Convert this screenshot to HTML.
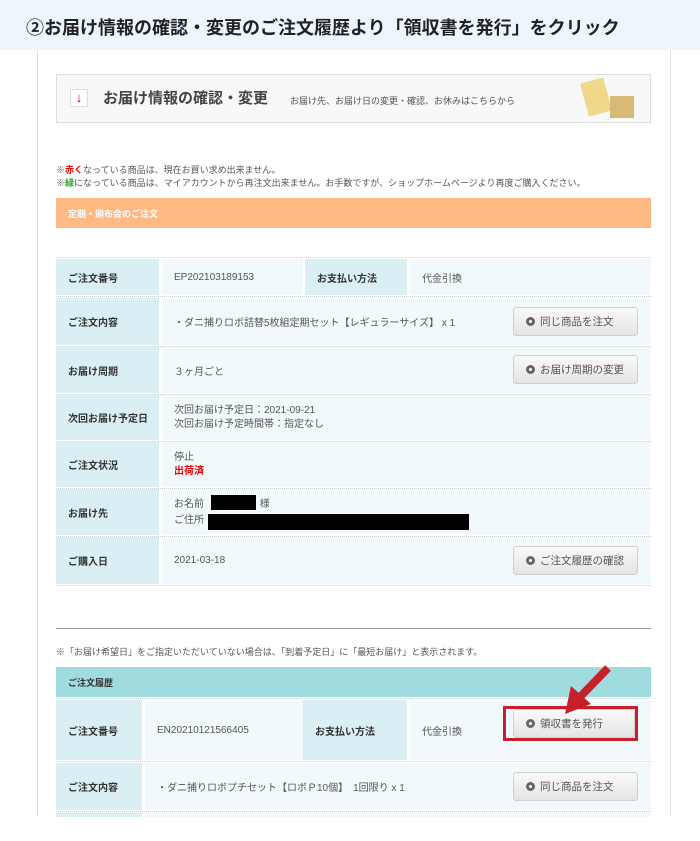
<!DOCTYPE html><html><head><meta charset="utf-8"><style>
*{margin:0;padding:0;box-sizing:border-box}
body{width:700px;height:841px;background:#fff;position:relative;overflow:hidden;font-family:"Liberation Sans","Noto Sans CJK JP",sans-serif;color:#555}
.a{position:absolute}
.lab{position:absolute;background:#daeff4;font-size:10px;font-weight:bold;color:#333;display:flex;align-items:center;padding-left:12px}
.val{position:absolute;background:#f1f9fc;font-size:10px;color:#555;display:flex;align-items:center;padding-left:12px}
.dot{position:absolute;left:56px;width:595px;border-top:1px dotted #ccc}
.btn{position:absolute;left:513px;width:125px;height:29px;border:1px solid #d0d0d0;border-radius:3px;background:linear-gradient(#fafafa,#e4e4e4);font-size:10.5px;color:#555;display:flex;align-items:center;padding-left:12px}
.btn:before{content:"";width:9px;height:9px;border-radius:50%;background:#fff;border:3px solid #666;margin-right:5px;box-sizing:border-box}
</style></head><body>
<div class="a" style="left:0;top:0;width:700px;height:50px;background:#edf5fd"></div>
<div class="a" style="left:26px;top:14px;font-size:18px;font-weight:bold;color:#222;white-space:nowrap">②お届け情報の確認・変更のご注文履歴より「領収書を発行」をクリック</div>
<div class="a" style="left:37px;top:50px;width:1px;height:766px;background:#e0e0e0"></div>
<div class="a" style="left:670px;top:50px;width:1px;height:766px;background:#e0e0e0"></div>
<div class="a" style="left:56px;top:74px;width:595px;height:49px;border:1px solid #ddd;background:#f8f8f8"></div>
<div class="a" style="left:70px;top:89px;width:18px;height:18px;border:1px solid #ddd;background:#fff;color:#c00;font-size:13px;font-weight:bold;text-align:center;line-height:16px">↓</div>
<div class="a" style="left:103px;top:87px;font-size:15px;font-weight:bold;color:#444">お届け情報の確認・変更</div>
<div class="a" style="left:290px;top:94px;font-size:9px;color:#555">お届け先、お届け日の変更・確認、お休みはこちらから</div>
<div class="a" style="left:584px;top:80px;width:24px;height:34px;background:#f0d88a;transform:rotate(-15deg);border-radius:2px"></div>
<div class="a" style="left:610px;top:96px;width:24px;height:22px;background:#d9b878"></div>
<div class="a" style="left:56px;top:164px;font-size:9px;color:#555;line-height:13px">※<b style="color:#e00">赤く</b>なっている商品は、現在お買い求め出来ません。<br>※<b style="color:#2a2">緑</b>になっている商品は、マイアカウントから再注文出来ません。お手数ですが、ショップホームページより再度ご購入ください。</div>
<div class="a" style="left:56px;top:198px;width:595px;height:30px;background:#ffb985;color:#fff;font-size:9px;font-weight:bold;padding:9px 0 0 12px">定期・頒布会のご注文</div>

<div class="dot" style="top:257px"></div>
<div class="lab" style="left:56px;top:259px;width:103px;height:36px">ご注文番号</div>
<div class="val" style="left:162px;top:259px;width:141px;height:36px">EP202103189153</div>
<div class="lab" style="left:305px;top:259px;width:102px;height:36px">お支払い方法</div>
<div class="val" style="left:410px;top:259px;width:241px;height:36px">代金引換</div>
<div class="dot" style="top:296px"></div>
<div class="lab" style="left:56px;top:298px;width:103px;height:47px">ご注文内容</div>
<div class="val" style="left:162px;top:298px;width:489px;height:47px">・ダニ捕りロボ詰替5枚組定期セット【レギュラーサイズ】 x 1</div>
<div class="btn" style="top:307px">同じ商品を注文</div>
<div class="dot" style="top:346px"></div>
<div class="lab" style="left:56px;top:347px;width:103px;height:46px">お届け周期</div>
<div class="val" style="left:162px;top:347px;width:489px;height:46px">３ヶ月ごと</div>
<div class="btn" style="top:355px">お届け周期の変更</div>
<div class="dot" style="top:394px"></div>
<div class="lab" style="left:56px;top:395px;width:103px;height:45px">次回お届け予定日</div>
<div class="val" style="left:162px;top:395px;width:489px;height:45px;line-height:14px"><div>次回お届け予定日：2021-09-21<br>次回お届け予定時間帯：指定なし</div></div>
<div class="dot" style="top:441px"></div>
<div class="lab" style="left:56px;top:442px;width:103px;height:45px">ご注文状況</div>
<div class="val" style="left:162px;top:442px;width:489px;height:45px;line-height:14px"><div>停止<br><b style="color:#e00">出荷済</b></div></div>
<div class="dot" style="top:488px"></div>
<div class="lab" style="left:56px;top:489px;width:103px;height:46px">お届け先</div>
<div class="val" style="left:162px;top:489px;width:489px;height:46px;line-height:16px"><div>お名前 <span style="display:inline-block;width:45px;height:15px;background:#000;margin:0 4px;vertical-align:-3px"></span>様<br>ご住所</div></div>
<div class="a" style="left:208px;top:514px;width:261px;height:16px;background:#000"></div>
<div class="dot" style="top:536px"></div>
<div class="lab" style="left:56px;top:537px;width:103px;height:47px">ご購入日</div>
<div class="val" style="left:162px;top:537px;width:489px;height:47px">2021-03-18</div>
<div class="btn" style="top:546px">ご注文履歴の確認</div>
<div class="dot" style="top:585px"></div>

<div class="a" style="left:56px;top:628px;width:595px;height:1px;background:#999"></div>
<div class="a" style="left:56px;top:645px;font-size:9px;color:#555">※「お届け希望日」をご指定いただいていない場合は、「到着予定日」に「最短お届け」と表示されます。</div>
<div class="a" style="left:56px;top:667px;width:595px;height:30px;background:#a0dcdf;font-size:9px;font-weight:bold;color:#333;padding:9px 0 0 12px">ご注文履歴</div>
<div class="dot" style="top:698px"></div>
<div class="lab" style="left:56px;top:700px;width:86px;height:60px">ご注文番号</div>
<div class="val" style="left:145px;top:700px;width:158px;height:60px">EN20210121566405</div>
<div class="lab" style="left:303px;top:700px;width:104px;height:60px">お支払い方法</div>
<div class="val" style="left:410px;top:700px;width:241px;height:60px">代金引換</div>
<div class="btn" style="top:709px;width:122px">領収書を発行</div>
<div class="a" style="left:503px;top:706px;width:135px;height:35px;border:3px solid #c8202a"></div>
<svg class="a" style="left:555px;top:664px" width="60" height="60"><line x1="53" y1="4" x2="25" y2="33" stroke="#c8202a" stroke-width="8"/><polygon points="10,50 16,22 36,40" fill="#c8202a"/></svg>
<div class="dot" style="top:761px"></div>
<div class="lab" style="left:56px;top:763px;width:86px;height:47px">ご注文内容</div>
<div class="val" style="left:145px;top:763px;width:506px;height:47px">・ダニ捕りロボプチセット【ロボＰ10個】　1回限り x 1</div>
<div class="btn" style="top:772px">同じ商品を注文</div>
<div class="dot" style="top:811px"></div>
<div class="lab" style="left:56px;top:813px;width:86px;height:4px"></div>
<div class="val" style="left:145px;top:813px;width:506px;height:4px"></div>
</body></html>
